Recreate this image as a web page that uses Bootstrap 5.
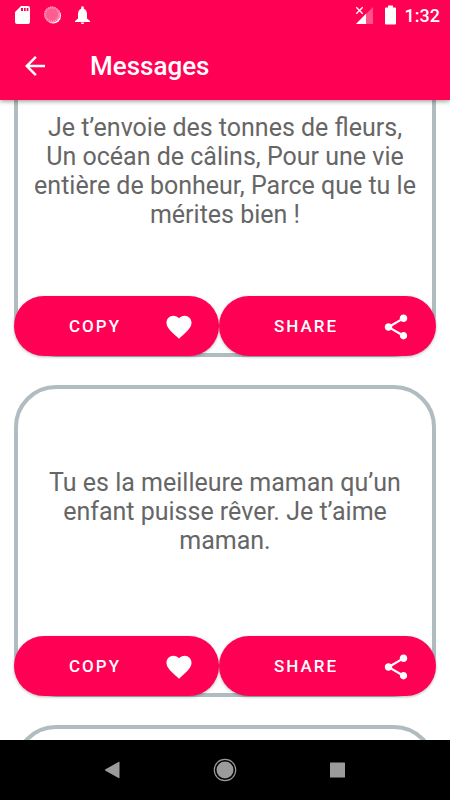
<!DOCTYPE html>
<html lang="fr">
<head>
<meta charset="utf-8">
<meta name="viewport" content="width=device-width, initial-scale=1">
<title>Messages</title>
<link href="https://cdn.jsdelivr.net/npm/bootstrap@5.3.0/dist/css/bootstrap.min.css" rel="stylesheet">
<style>
body { font-family: Roboto, "Liberation Sans", sans-serif; background: #fff; }
svg { display: block; flex: none; fill: currentColor; }
.app-top { background: #ff0055; z-index: 2; box-shadow: 0 1px 5px rgba(0,0,0,.45); }
.status-bar { height: 30px; padding: 0 10px 0 13px; font-size: 18px; }
.status-left { gap: 10px; }
.status-right { gap: 8px; }
.title-bar { height: 70px; padding: 2px 20px 0; gap: 40px; }
.title-bar h1 { font-size: 26px; line-height: 30px; font-weight: 500; }
.feed { min-height: 0; }
.feed-list { margin-top: -55px; padding: 0 14px; gap: 28px; }
.message-card { min-height: 312px; border: 4px solid #b0bcbf; border-radius: 42px; }
.message-card p { font-size: 25px; line-height: 29px; color: #666; padding: 0 12px 3px; }
.card-actions { margin: 0 -4px -3px; }
.action { height: 60px; padding: 2px 25px 0 55px; gap: 42px; font-size: 17px; font-weight: 500; letter-spacing: 2px;
  --bs-btn-color: #fff; --bs-btn-bg: #ff0055; --bs-btn-hover-color: #fff; --bs-btn-hover-bg: #e6004d; --bs-btn-border-width: 0;
  box-shadow: 0 1px 3px rgba(0,0,0,.28); }
.nav-bar { height: 60px; padding: 0 56px; color: #9b9b9b; }
.nav-bar .btn { --bs-btn-color: #9b9b9b; --bs-btn-hover-color: #fff; --bs-btn-border-width: 0; }
</style>
</head>
<body>
<svg width="0" height="0" class="position-absolute" aria-hidden="true">
  <symbol id="heart" viewBox="0 0 24 24"><path d="M12 21.35l-1.45-1.32C5.4 15.36 2 12.28 2 8.5 2 5.42 4.42 3 7.5 3c1.74 0 3.41.81 4.5 2.09C13.09 3.81 14.76 3 16.5 3 19.58 3 22 5.42 22 8.5c0 3.78-3.4 6.86-8.55 11.54L12 21.35z"/></symbol>
  <symbol id="share" viewBox="0 0 24 24"><path d="M18 16.08c-.76 0-1.44.3-1.96.77L8.91 12.7c.05-.23.09-.46.09-.7s-.04-.47-.09-.7l7.05-4.11c.54.5 1.25.81 2.04.81 1.66 0 3-1.34 3-3s-1.34-3-3-3-3 1.34-3 3c0 .24.04.47.09.7L8.04 9.81C7.5 9.31 6.79 9 6 9c-1.66 0-3 1.34-3 3s1.34 3 3 3c.79 0 1.5-.31 2.04-.81l7.12 4.16c-.05.21-.08.43-.08.65 0 1.61 1.31 2.92 2.92 2.92s2.92-1.31 2.92-2.92-1.31-2.92-2.92-2.92z"/></symbol>
</svg>
<div class="vh-100 d-flex flex-column overflow-hidden">
  <header class="app-top text-white position-relative flex-shrink-0">
    <div class="status-bar d-flex align-items-center justify-content-between">
      <div class="status-left d-flex align-items-center">
        <svg width="18" height="20" viewBox="0 0 18 20" aria-hidden="true"><path fill-rule="evenodd" d="M8 1h7q2 0 2 2v14q0 2-2 2H4q-2 0-2-2V7zM8 3v3h2V3zM11 3v3h1.700V3zM13.700 3v3h1.700V3z"/></svg>
        <svg width="20" height="20" viewBox="0 0 20 20" aria-hidden="true"><circle cx="12.200" cy="10.700" r="7.800"/><circle cx="11" cy="9.500" r="8" fill="#ff5c94"/><circle cx="11" cy="9.500" r="7" fill="none" stroke="#ff9dbf" stroke-width="2" stroke-dasharray="1.200 1"/></svg>
        <svg width="20" height="20" viewBox="0 0 20 20" aria-hidden="true"><path d="M9.700 17.500h3.600q-.3 1.500-1.800 1.500t-1.800-1.500zM4 17v-1l3-2.500V9q0-4 3.200-5.200V2.500q0-1.300 1.300-1.300t1.300 1.300v1.300Q16 5 16 9v4.500l3 2.500v1z"/></svg>
      </div>
      <div class="status-right d-flex align-items-center">
        <svg width="19" height="20" viewBox="0 0 19 20" aria-hidden="true"><path d="M18 2v17H1z" opacity=".32"/><path d="M11 8.800V19H1z"/><path d="M1.300 2.300l6.400 6.400m0-6.400l-6.400 6.400" fill="none" stroke="currentColor" stroke-width="1.300"/></svg>
        <svg width="15" height="20" viewBox="0 0 15 20" aria-hidden="true"><path d="M6 .5h5v2h2q1 0 1 1v15q0 1-1 1H4q-1 0-1-1v-15q0-1 1-1h2z"/></svg>
        <span class="fw-medium">1:32</span>
      </div>
    </div>
    <div class="title-bar d-flex align-items-center">
      <a href="#" class="text-white" aria-label="Back"><svg width="30" height="30" viewBox="0 0 24 24" aria-hidden="true"><path d="M20 11H7.830l5.590-5.590L12 4l-8 8 8 8 1.410-1.410L7.830 13H20v-2z"/></svg></a>
      <h1 class="m-0">Messages</h1>
    </div>
  </header>
  <main class="feed flex-fill overflow-hidden">
    <div class="feed-list d-flex flex-column">
      <article class="message-card d-flex flex-column">
        <div class="flex-fill d-flex align-items-center justify-content-center">
          <p class="m-0 text-center">Je t’envoie des tonnes de fleurs, Un océan de câlins, Pour une vie entière de bonheur, Parce que tu le mérites bien !</p>
        </div>
        <div class="card-actions d-flex">
          <button type="button" class="action btn rounded-pill flex-fill d-flex align-items-center justify-content-between">COPY<svg width="30" height="30" aria-hidden="true"><use href="#heart"/></svg></button>
          <button type="button" class="action btn rounded-pill flex-fill d-flex align-items-center justify-content-between">SHARE<svg width="30" height="30" aria-hidden="true"><use href="#share"/></svg></button>
        </div>
      </article>
      <article class="message-card d-flex flex-column">
        <div class="flex-fill d-flex align-items-center justify-content-center">
          <p class="m-0 text-center">Tu es la meilleure maman qu’un enfant puisse rêver. Je t’aime maman.</p>
        </div>
        <div class="card-actions d-flex">
          <button type="button" class="action btn rounded-pill flex-fill d-flex align-items-center justify-content-between">COPY<svg width="30" height="30" aria-hidden="true"><use href="#heart"/></svg></button>
          <button type="button" class="action btn rounded-pill flex-fill d-flex align-items-center justify-content-between">SHARE<svg width="30" height="30" aria-hidden="true"><use href="#share"/></svg></button>
        </div>
      </article>
      <article class="message-card"></article>
    </div>
  </main>
  <nav class="nav-bar bg-black d-flex align-items-center flex-shrink-0" aria-label="System">
    <button type="button" class="btn p-0 flex-fill d-flex justify-content-center" aria-label="Back"><svg width="24" height="24" viewBox="0 0 24 24" aria-hidden="true"><path d="M19.500 4.500v15q0 1-1 .5L5.500 12.700q-1-.7 0-1.400L18.500 4q1-.5 1 .5z"/></svg></button>
    <button type="button" class="btn p-0 flex-fill d-flex justify-content-center" aria-label="Home"><svg width="24" height="24" viewBox="0 0 24 24" aria-hidden="true"><circle cx="12" cy="12" r="8.500"/><circle cx="12" cy="12" r="10.700" fill="none" stroke="currentColor" stroke-width="1.200"/></svg></button>
    <button type="button" class="btn p-0 flex-fill d-flex justify-content-center" aria-label="Recent apps"><svg width="24" height="24" viewBox="0 0 24 24" aria-hidden="true"><rect x="4" y="4.500" width="15" height="15" rx=".5"/></svg></button>
  </nav>
</div>
<script src="https://cdn.jsdelivr.net/npm/bootstrap@5.3.0/dist/js/bootstrap.bundle.min.js"></script>
</body>
</html>
